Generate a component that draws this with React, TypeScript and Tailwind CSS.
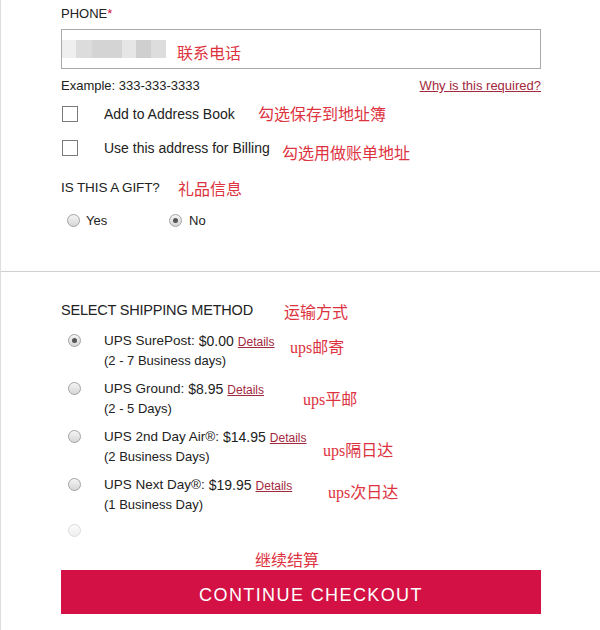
import React from 'react';

const sans = "font-['Liberation_Sans',Arial,sans-serif]";
const note = "font-['Noto_Sans_CJK_SC',sans-serif] text-[16px] leading-[20px] text-[#dd3340]";
const noteSerif = "font-['Liberation_Serif','Noto_Sans_CJK_SC',serif] text-[16px] leading-[20px] text-[#dd3340]";

function Radio({ checked = false, faded = false }: { checked?: boolean; faded?: boolean }) {
  return (
    <div
      className={
        'flex h-[13px] w-[13px] shrink-0 items-center justify-center rounded-full border bg-gradient-to-b ' +
        (faded
          ? 'border-[#dcdcdc] from-[#fafafa] to-[#efefef]'
          : 'border-[#a3a3a3] from-[#f4f4f4] to-[#d6d6d6]')
      }
    >
      {checked && <div className="h-[5px] w-[5px] rounded-full bg-[#555]" />}
    </div>
  );
}

function Checkbox() {
  return <div className="ml-[1px] h-[16px] w-[16px] shrink-0 border border-[#7a7a7a] bg-white" />;
}

const shipping = [
  { name: 'UPS SurePost:', price: '$0.00', sub: '(2 - 7 Business days)', w: 'w-[229px]', cn: '邮寄', mt: 'mt-[4px]' },
  { name: 'UPS Ground:', price: '$8.95', sub: '(2 - 5 Days)', w: 'w-[242px]', cn: '平邮', mt: 'mt-[8px]' },
  { name: 'UPS 2nd Day Air®:', price: '$14.95', sub: '(2 Business Days)', w: 'w-[262px]', cn: '隔日达', mt: 'mt-[11px]' },
  { name: 'UPS Next Day®:', price: '$19.95', sub: '(1 Business Day)', w: 'w-[267px]', cn: '次日达', mt: 'mt-[5px]' },
];

export default function App() {
  return (
    <div className={`min-h-[630px] w-[600px] border-l border-[#dedede] bg-white text-[#222] ${sans}`}>
      {/* contact section */}
      <div className="h-[271px] px-[60px] pt-[6px]">
        <div className="text-[13px] leading-[16px]">
          PHONE<span className="text-[#d31145]">*</span>
        </div>
        <div className="mt-[7px] flex h-[40px] w-[480px] items-center border border-[#aaa]">
          <div className="flex h-[18px] w-[104px]">
            <div className="w-[14px] bg-[#efefef]" />
            <div className="w-[16px] bg-[#dcdcdc]" />
            <div className="w-[30px] bg-[#d4d4d4]" />
            <div className="w-[14px] bg-[#e6e6e6]" />
            <div className="w-[15px] bg-[#cfcfcf]" />
            <div className="w-[15px] bg-[#dddddd]" />
          </div>
          <span className={`ml-[11px] mt-[5px] ${note}`}>联系电话</span>
        </div>
        <div className="mt-[9px] flex w-[480px] items-center justify-between text-[13px] leading-[16px]">
          <span>Example: 333-333-3333</span>
          <a className="text-[#a3283c] underline">Why is this required?</a>
        </div>

        <div className="mt-[10px] flex h-[20px] items-center">
          <Checkbox />
          <span className="ml-[26px] w-[154px] text-[14px]">Add to Address Book</span>
          <span className={`${note} -mt-[2px]`}>勾选保存到地址簿</span>
        </div>
        <div className="mt-[14px] flex h-[20px] items-center">
          <Checkbox />
          <span className="ml-[26px] w-[178px] text-[14px]">Use this address for Billing</span>
          <span className={`${note} mt-[7px]`}>勾选用做账单地址</span>
        </div>

        <div className="mt-[20px] flex h-[20px] items-center">
          <span className="w-[117px] text-[13.5px] tracking-[-0.1px]">IS THIS A GIFT?</span>
          <span className={note}>礼品信息</span>
        </div>
        <div className="mt-[12px] flex h-[20px] items-center text-[13px]">
          <div className="ml-[6px]"><Radio /></div>
          <span className="ml-[6px] mt-[2px] w-[83px]">Yes</span>
          <Radio checked />
          <span className="ml-[7px] mt-[2px]">No</span>
        </div>
      </div>

      {/* shipping section */}
      <div className="border-t border-[#cfcfcf] px-[60px] pt-[30px]">
        <div className="flex h-[18px] items-center">
          <span className="w-[223px] text-[14.5px] tracking-[-0.2px]">SELECT SHIPPING METHOD</span>
          <span className={note}>运输方式</span>
        </div>

        <div className="mt-[12px] flex flex-col gap-[10px]">
          {shipping.map((s, i) => (
            <div key={s.name} className="flex h-[38px] items-start">
              <div className={`flex ${s.w} items-start`}>
                <div className="ml-[7px] mt-[2px]">
                  <Radio checked={i === 0} />
                </div>
                <div className="ml-[23px] flex flex-col">
                  <div className="flex h-[19px] items-center whitespace-nowrap text-[13.5px]">
                    {s.name}
                    <span className="ml-[4px] text-[14px]">{s.price}</span>
                    <a className="ml-[4px] text-[12px] text-[#a3283c] underline">Details</a>
                  </div>
                  <div className="h-[19px] text-[13px] leading-[19px]">{s.sub}</div>
                </div>
              </div>
              <span className={`${noteSerif} ${s.mt}`}>
                ups
                <span className="font-['Noto_Sans_CJK_SC',sans-serif]">{s.cn}</span>
              </span>
            </div>
          ))}
          <div className="ml-[7px]">
            <Radio faded />
          </div>
        </div>

        <div className={`mt-[12px] pl-[194px] ${note}`}>继续结算</div>
        <button className="mt-[1px] flex h-[44px] w-[480px] items-center justify-center pl-[20px] pt-[6px] text-[18px] tracking-[1.4px] text-white bg-[#d31145]">
          CONTINUE CHECKOUT
        </button>
      </div>
    </div>
  );
}
